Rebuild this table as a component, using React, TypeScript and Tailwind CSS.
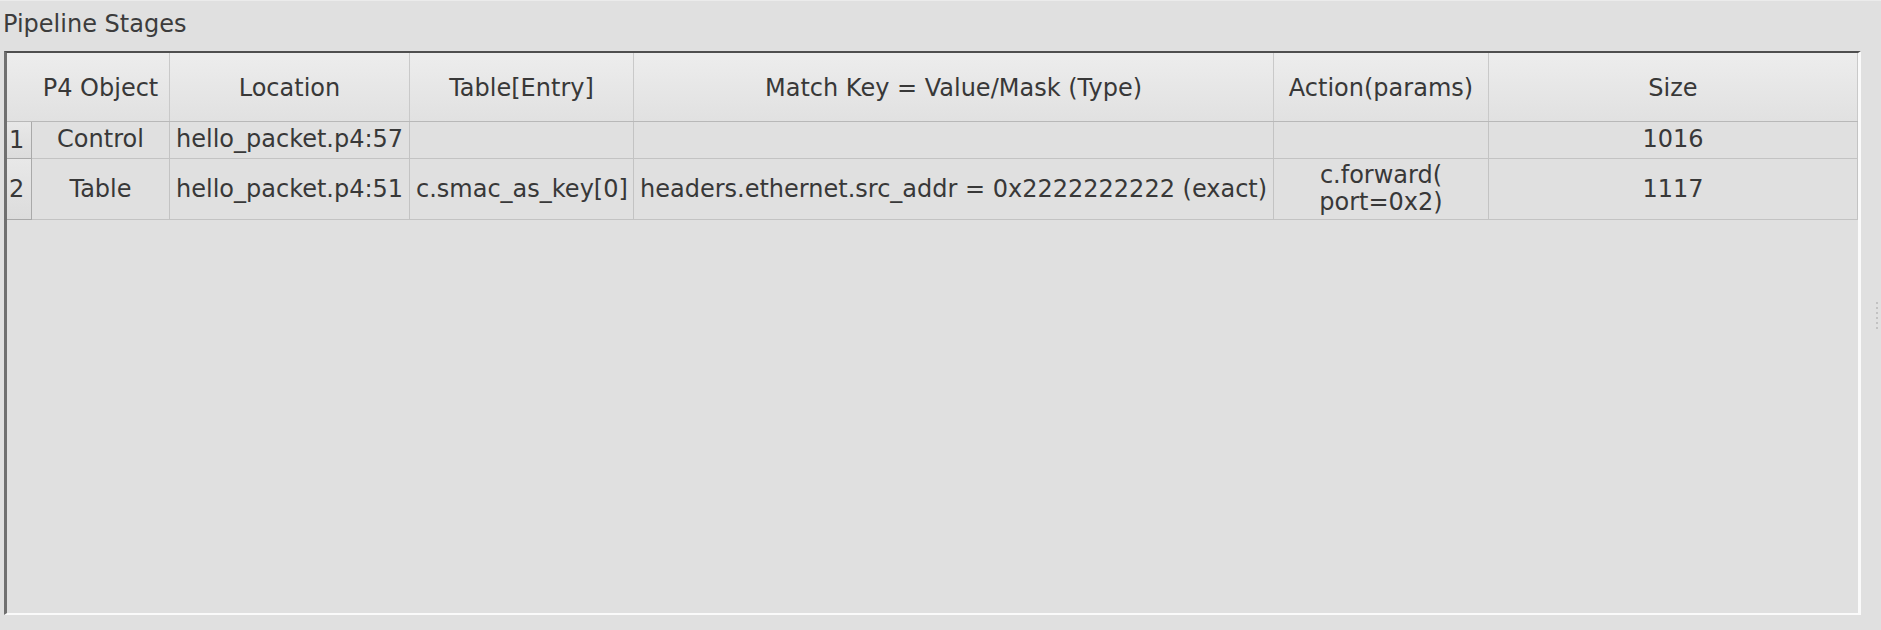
import { ReactNode } from 'react';

type Align = 'left' | 'center';

interface Column {
  title: string;
  width: string;
  align: Align;
}

const columns: Column[] = [
  { title: 'P4 Object', width: 'w-[138px]', align: 'center' },
  { title: 'Location', width: 'w-[240px]', align: 'center' },
  { title: 'Table[Entry]', width: 'w-[224px]', align: 'center' },
  { title: 'Match Key = Value/Mask (Type)', width: 'w-[640px]', align: 'center' },
  { title: 'Action(params)', width: 'w-[215px]', align: 'center' },
  { title: 'Size', width: 'w-[369px]', align: 'center' },
];

// alignment of body cells per column
const bodyAlign: Align[] = ['center', 'left', 'left', 'left', 'center', 'center'];

const rows: { height: string; pad: string; cells: ReactNode[] }[] = [
  {
    height: 'h-[37px]',
    pad: 'pb-[2px]',
    cells: ['Control', 'hello_packet.p4:57', '', '', '', '1016'],
  },
  {
    height: 'h-[61px]',
    pad: 'pb-0',
    cells: [
      'Table',
      'hello_packet.p4:51',
      'c.smac_as_key[0]',
      'headers.ethernet.src_addr = 0x2222222222 (exact)',
      <>
        <span>c.forward(</span>
        <span>port=0x2)</span>
      </>,
      '1117',
    ],
  },
];

const HeaderCell = ({ col }: { col: Column }) => (
  <div
    className={`${col.width} h-full flex items-center justify-center pt-[2px] border-r border-[#c9c9c9] shrink-0`}
  >
    {col.title}
  </div>
);

const BodyCell = ({
  width,
  align,
  pad,
  children,
}: {
  width: string;
  align: Align;
  pad: string;
  children: ReactNode;
}) => (
  <div
    className={`${width} ${pad} h-full flex flex-col justify-center border-r border-b border-[#c3c3c3] shrink-0 whitespace-nowrap leading-[27px] ${
      align === 'center' ? 'items-center' : 'items-start pl-[6px]'
    }`}
  >
    {children}
  </div>
);

export default function App() {
  return (
    <div className="w-[1881px] h-[630px] bg-[#e0e0e0] border-t border-[#ebebeb] flex font-['DejaVu_Sans',sans-serif] text-[24px] text-[#383838] overflow-hidden">
      <div className="flex flex-col">
        {/* Group title */}
        <div className="h-[50px] pl-[3px] pt-[9px] leading-[28px] text-[#3c3c3c]">Pipeline Stages</div>

        {/* Sunken table frame */}
        <div className="ml-[4px] w-[1857px] h-[564px] border-t-2 border-l-[3px] border-r-[3px] border-b-2 border-t-[#4f4f4f] border-l-[#707070] border-r-[#fafafa] border-b-[#fafafa] flex flex-col">
          {/* Horizontal header */}
          <div className="h-[69px] flex bg-gradient-to-b from-[#ededed] to-[#e1e1e1] border-b border-[#b8b8b8]">
            <div className="w-[25px] h-full shrink-0" />
            {columns.map((col) => (
              <HeaderCell key={col.title} col={col} />
            ))}
          </div>

          {/* Body rows */}
          {rows.map((row, i) => (
            <div key={i} className={`${row.height} flex`}>
              <div className="w-[25px] h-full shrink-0 flex items-center pl-[2px] bg-gradient-to-b from-[#e8e8e8] to-[#dcdcdc] border-r border-b border-[#a9a9a9]">
                {i + 1}
              </div>
              {row.cells.map((cell, j) => (
                <BodyCell key={j} width={columns[j].width} align={bodyAlign[j]} pad={row.pad}>
                  {cell}
                </BodyCell>
              ))}
            </div>
          ))}
        </div>
      </div>

      {/* Splitter handle */}
      <div className="flex-1 flex flex-col items-end justify-center pr-[3px] gap-[3px]">
        {[0, 1, 2, 3, 4, 5].map((d) => (
          <div key={d} className="w-[2px] h-[2px] bg-[#c2c2c2]" />
        ))}
      </div>
    </div>
  );
}
